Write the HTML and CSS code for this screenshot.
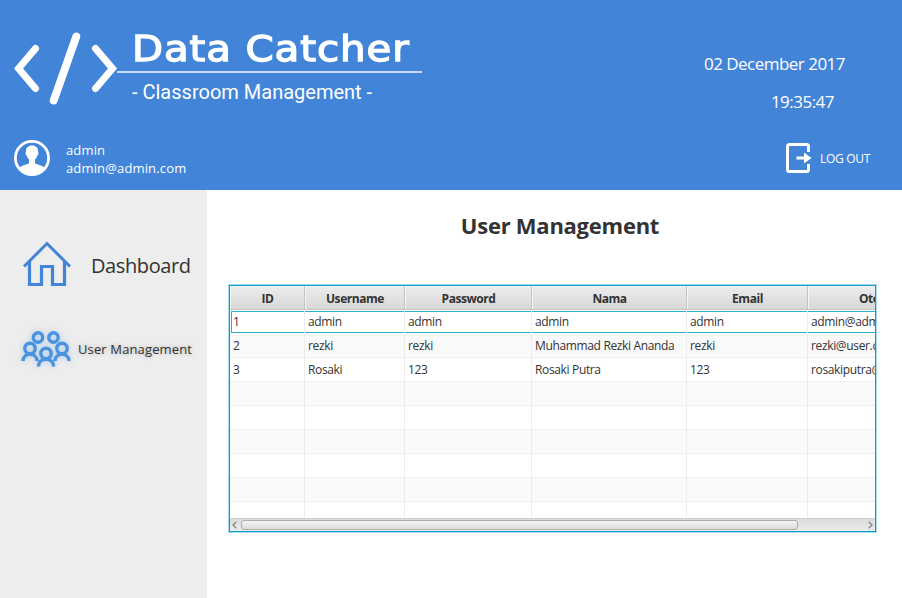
FILE: index.html
```html
<!DOCTYPE html>
<html lang="en">
<head>
<meta charset="utf-8">
<title>Data Catcher</title>
<link rel="stylesheet" href="styles.css">
</head>
<body>
<header class="top">
  <div class="top-row">
    <svg class="logo" viewBox="0 0 106 74" width="106" height="74" fill="none" stroke="#fff" stroke-linecap="round" stroke-linejoin="miter">
      <path d="M21.500 17.500 4.500 37.500 21.500 57.500M81.500 17.500 98.500 37.500 81.500 57.500" stroke-width="7"/>
      <path d="M62.300 5.500 39.700 69.500" stroke-width="8"/>
    </svg>
    <div class="brand">
      <h1 class="brand-name">Data Catcher</h1>
      <p class="brand-sub">- Classroom Management -</p>
    </div>
    <div class="clock">
      <p class="date">02 December 2017</p>
      <p class="time">19:35:47</p>
    </div>
  </div>
  <div class="account">
    <svg class="avatar" viewBox="0 0 36 36" width="36" height="36">
      <circle cx="18" cy="18" r="16.600" fill="none" stroke="#fff" stroke-width="2.800"/>
      <path d="M18 5.500c-4.200 0-6.300 2.500-6 6.300-.9.700-.3 3.200.8 4 .5 1.700 1.200 2.900 2.200 3.700v3.600c-1.500 2-7.200 1.600-9.500 5C8.500 32 13 35 18 35s9.500-3 12.500-6.900c-2.300-3.400-8-3-9.500-5v-3.600c1-.8 1.700-2 2.200-3.700 1.100-.8 1.700-3.300.8-4 .3-3.800-1.800-6.300-6-6.300z" fill="#fff"/>
    </svg>
    <div class="who"><p class="who-name">admin</p><p class="who-mail">admin@admin.com</p></div>
    <svg class="exit" viewBox="0 0 26 30" width="26" height="30">
      <path d="M22.500 9V3.500Q22.500 1.500 20.500 1.500H3.500Q1.500 1.500 1.500 3.500V26.500Q1.500 28.500 3.500 28.500H20.500Q22.500 28.500 22.500 26.500V21" fill="none" stroke="#fff" stroke-width="3"/>
      <path d="M10.500 13.500H18V9.500L25.500 15 18 20.500V16.500H10.500z" fill="#fff"/>
    </svg>
    <span class="logout">LOG OUT</span>
  </div>
</header>
<div class="body">
  <nav class="side">
    <a class="item item-home">
      <svg viewBox="0 0 48 46" width="48" height="46" fill="none" stroke="#4184d8" stroke-width="3">
        <path d="M1 25.500 24 2.500 47 25.500"/>
        <path d="M6.500 20.500V43.500H18.500V25.500H29.500V43.500H41.500V20.500" stroke-width="3.200"/>
      </svg>
      <span class="label-home">Dashboard</span>
    </a>
    <a class="item item-users">
      <svg viewBox="0 0 50 37" width="50" height="37" fill="none" stroke="#4a93df" stroke-width="3.400">
        <circle cx="17" cy="6.500" r="4.700"/><circle cx="32.500" cy="6.500" r="4.700"/>
        <circle cx="9" cy="17.500" r="5.200"/><circle cx="41" cy="17.500" r="5.200"/><circle cx="25" cy="22.500" r="5.200"/>
        <path d="M2 30C2 21 16 21 16 30M34 30C34 21 48 21 48 30M17.500 35.500C17.500 26 32.500 26 32.500 35.500"/>
      </svg>
      <span class="label-users">User Management</span>
    </a>
  </nav>
  <main class="main">
    <h2 class="title">User Management</h2>
    <div class="table">
      <div class="row head"><b>ID</b><b>Username</b><b>Password</b><b>Nama</b><b>Email</b><b>Otoritas</b></div>
      <div class="rows">
        <div class="row focus"><span>1</span><span>admin</span><span>admin</span><span>admin</span><span>admin</span><span>admin@admin.com</span></div>
        <div class="row"><span>2</span><span>rezki</span><span>rezki</span><span>Muhammad Rezki Ananda</span><span>rezki</span><span>rezki@user.com</span></div>
        <div class="row"><span>3</span><span>Rosaki</span><span>123</span><span>Rosaki Putra</span><span>123</span><span>rosakiputra@user.com</span></div>
        <div class="row"><span></span><span></span><span></span><span></span><span></span><span></span></div>
        <div class="row"><span></span><span></span><span></span><span></span><span></span><span></span></div>
        <div class="row"><span></span><span></span><span></span><span></span><span></span><span></span></div>
        <div class="row"><span></span><span></span><span></span><span></span><span></span><span></span></div>
        <div class="row"><span></span><span></span><span></span><span></span><span></span><span></span></div>
        <div class="row"><span></span><span></span><span></span><span></span><span></span><span></span></div>
      </div>
      <div class="scroll">
        <svg viewBox="0 0 5 8" width="5" height="8" fill="none" stroke="#8c8c8c" stroke-width="1.500"><path d="M4.300.7 1 4 4.300 7.300"/></svg>
        <div class="thumb"></div>
        <svg viewBox="0 0 5 8" width="5" height="8" fill="none" stroke="#8c8c8c" stroke-width="1.500"><path d="M.7.7 4 4 .7 7.300"/></svg>
      </div>
    </div>
  </main>
</div>
</body>
</html>
```
FILE: styles.css
```css
* { box-sizing: border-box; margin: 0; padding: 0; }
body { width: 902px; height: 598px; overflow: hidden; background: #fff; font-family: "Open Sans", "Noto Sans", sans-serif; color: #333; }
p, h1, h2, span, b { white-space: nowrap; }
.top { height: 190px; background: #4184d8; color: #fff; }
.top-row { display: flex; height: 136px; padding-left: 14px; }
.logo { margin-top: 31px; flex: none; }
.brand { width: 305px; margin-left: -3px; padding-top: 27px; }
.brand-name { height: 44px; margin-left: 15px; font: 400 36px/43px "DejaVu Sans", sans-serif; letter-spacing: .8px; -webkit-text-stroke: 1.3px #fff; transform: scaleX(1.12); transform-origin: 0 0; }
.brand-sub { padding: 7px 0 0 15px; border-top: 2px solid #c6d9f2; font: 400 20px/24px Roboto, sans-serif; }
.clock { margin-left: auto; padding: 52px 57px 0 0; font-size: 17px; line-height: 24px; text-align: right; letter-spacing: -.52px; }
.time { margin: 14px 11px 0 0; }
.account { display: flex; height: 54px; padding-left: 14px; }
.avatar { margin-top: 4px; }
.who { margin: 5px 0 0 16px; font-size: 13px; line-height: 18px; letter-spacing: .15px; }
.exit { margin: 7px 8px 0 auto; }
.logout { width: 82px; margin-top: 14px; font-size: 12px; line-height: 18px; letter-spacing: -.3px; }
.body { display: flex; height: 408px; }
.side { width: 207px; background: #ededed; }
.item { display: flex; }
.item svg { flex: none; }
.item-home { padding: 51px 0 0 23px; height: 139px; }
.label-home { margin: 9px 0 0 20px; font-size: 20px; line-height: 32px; letter-spacing: -.4px; }
.item-users { padding: 2px 0 0 21px; }
.item-users svg { filter: drop-shadow(0 0 3px #70a8e580); }
.label-users { margin: 6px 0 0 7px; font-size: 13px; line-height: 24px; letter-spacing: .13px; text-shadow: 0 0 4px #3335; }
.main { width: 695px; padding: 19px 0 0 21px; }
.title { width: 664px; font-size: 22px; line-height: 33px; letter-spacing: -.25px; text-align: center; }
.table { width: 647px; height: 247px; margin: 43px 0 0 1px; border: 1px solid #0f9bd0; box-shadow: 0 0 0 1px #a5dcf0; overflow: hidden; }
.row { display: grid; grid-template-columns: 75px 100px 127px 155px 121px 148px; height: 24px; font-size: 12px; line-height: 23px; letter-spacing: -.35px; }
.row > * { border-right: 1px solid #ededed; border-bottom: 1px solid #ededed; padding-left: 3px; overflow: hidden; }
.row:nth-child(even) { background: #f9f9f9; }
.head > b { background: linear-gradient(#ededed, #d8d8d8); border-color: #c4c4c4; box-shadow: inset 1px 1px #f6f6f6; text-align: center; padding: 1px 0 0 1px; line-height: 24px; letter-spacing: -.45px; }
.rows { height: 208px; overflow: hidden; }
.focus > span { border-bottom-color: #fff; box-shadow: inset 0 1px #fff, inset 0 2px #2badd3, inset 0 -1px #2badd3; }
.focus > span:first-child { box-shadow: inset 1px 1px #fff, inset 2px 2px #2badd3, inset 0 -1px #2badd3; }
.scroll { display: flex; align-items: center; justify-content: space-between; height: 13px; padding: 0 2px; background: linear-gradient(#dcdcdc, #ececec); border-top: 1px solid #cfcfcf; }
.thumb { width: 557px; height: 10px; margin: 0 auto 0 4px; border: 1px solid #adadad; border-radius: 3px; background: linear-gradient(#f4f4f4, #dcdcdc); }
```
